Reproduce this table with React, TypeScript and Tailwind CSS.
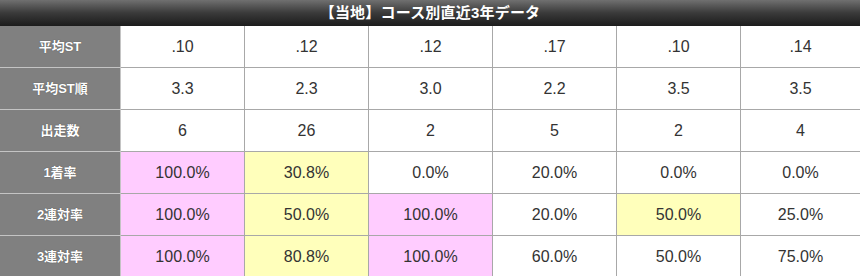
const cols = 6;

type Cell = { v: string; bg?: string };

const pink = "bg-[#ffccff]";
const yellow = "bg-[#ffffbb]";

const rows: { label: string; cells: Cell[] }[] = [
  { label: "平均ST", cells: [".10", ".12", ".12", ".17", ".10", ".14"].map((v) => ({ v })) },
  { label: "平均ST順", cells: ["3.3", "2.3", "3.0", "2.2", "3.5", "3.5"].map((v) => ({ v })) },
  { label: "出走数", cells: ["6", "26", "2", "5", "2", "4"].map((v) => ({ v })) },
  {
    label: "1着率",
    cells: [
      { v: "100.0%", bg: pink },
      { v: "30.8%", bg: yellow },
      { v: "0.0%" },
      { v: "20.0%" },
      { v: "0.0%" },
      { v: "0.0%" },
    ],
  },
  {
    label: "2連対率",
    cells: [
      { v: "100.0%", bg: pink },
      { v: "50.0%", bg: yellow },
      { v: "100.0%", bg: pink },
      { v: "20.0%" },
      { v: "50.0%", bg: yellow },
      { v: "25.0%" },
    ],
  },
  {
    label: "3連対率",
    cells: [
      { v: "100.0%", bg: pink },
      { v: "80.8%", bg: yellow },
      { v: "100.0%", bg: pink },
      { v: "60.0%" },
      { v: "50.0%" },
      { v: "75.0%" },
    ],
  },
];

export default function App() {
  return (
    <div className="w-[860px] h-[276px] overflow-hidden bg-white font-['Liberation_Sans','Noto_Sans_CJK_JP',sans-serif]">
      <div className="h-[26px] flex items-center justify-center bg-gradient-to-b from-[#707070] via-[#3a3a3a] to-[#1c1c1c] text-white text-[15px] font-bold tracking-[0.2px]">
        【当地】コース別直近3年データ
      </div>
      <div className="grid grid-cols-[121px_124px_124px_124px_124px_124px_1fr]">
        {rows.map((r) => (
          <div key={r.label} className="contents">
            <div className="h-[42px] flex items-center justify-center bg-[#808080] border-r border-b border-[#c4c4c4] text-white text-[13px] font-bold [text-shadow:0_0_1px_rgba(0,0,0,0.5)]">
              {r.label}
            </div>
            {r.cells.map((c, i) => (
              <div
                key={i}
                className={`h-[42px] flex items-center justify-center border-b border-[#a8a8a8] text-[16px] text-[#333] ${
                  i < cols - 1 ? "border-r" : ""
                } ${c.bg ?? "bg-white"}`}
              >
                {c.v}
              </div>
            ))}
          </div>
        ))}
      </div>
    </div>
  );
}
